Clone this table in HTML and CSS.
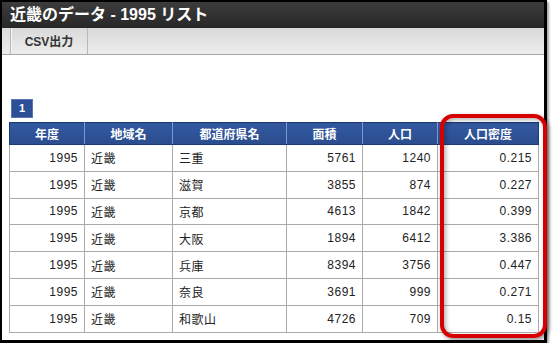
FILE: index.html
```html
<!DOCTYPE html>
<html lang="ja">
<head>
<meta charset="utf-8">
<link rel="stylesheet" href="styles.css">
</head>
<body>
<div class="frame">
  <div class="titlebar">近畿のデータ - 1995 リスト</div>
  <div class="toolbar">
    <div class="tool-btn">CSV出力</div>
  </div>
  <div class="content">
    <div class="pager"><span class="page">1</span></div>
    <table class="grid">
      <colgroup>
        <col class="c1"><col class="c2"><col class="c3"><col class="c4"><col class="c5"><col class="c6">
      </colgroup>
      <thead>
        <tr><th>年度</th><th>地域名</th><th>都道府県名</th><th>面積</th><th>人口</th><th>人口密度</th></tr>
      </thead>
      <tbody>
        <tr><td class="num">1995</td><td>近畿</td><td>三重</td><td class="num">5761</td><td class="num">1240</td><td class="num">0.215</td></tr>
        <tr><td class="num">1995</td><td>近畿</td><td>滋賀</td><td class="num">3855</td><td class="num">874</td><td class="num">0.227</td></tr>
        <tr><td class="num">1995</td><td>近畿</td><td>京都</td><td class="num">4613</td><td class="num">1842</td><td class="num">0.399</td></tr>
        <tr><td class="num">1995</td><td>近畿</td><td>大阪</td><td class="num">1894</td><td class="num">6412</td><td class="num">3.386</td></tr>
        <tr><td class="num">1995</td><td>近畿</td><td>兵庫</td><td class="num">8394</td><td class="num">3756</td><td class="num">0.447</td></tr>
        <tr><td class="num">1995</td><td>近畿</td><td>奈良</td><td class="num">3691</td><td class="num">999</td><td class="num">0.271</td></tr>
        <tr><td class="num">1995</td><td>近畿</td><td>和歌山</td><td class="num">4726</td><td class="num">709</td><td class="num">0.15</td></tr>
      </tbody>
    </table>
  </div>
  <div class="highlight"></div>
</div>
</body>
</html>
```

FILE: styles.css
```css
html, body {
  margin: 0;
  padding: 0;
  background: #ffffff;
}
body {
  font-family: "Liberation Sans", "Noto Sans CJK JP", sans-serif;
  font-size: 12px;
  color: #222;
}
.frame {
  position: relative;
  width: 542px;
  height: 338px;
  border-left: 2px solid #000;
  border-top: 2px solid #000;
  border-right: 3px solid #000;
  border-bottom: 3px solid #000;
  box-shadow: 2px 2px 2px rgba(0,0,0,0.35);
  background: #fff;
}
.titlebar {
  height: 26px;
  line-height: 25px;
  padding-left: 8px;
  color: #fff;
  font-size: 16px;
  font-weight: bold;
  background: linear-gradient(#3c3c3c, #272727);
}
.toolbar {
  height: 26px;
  display: flex;
  padding-left: 8px;
  background: linear-gradient(#d9d9d9, #ededed);
  border-bottom: 1px solid #a8a8a8;
}
.tool-btn {
  width: 76px;
  border-left: 1px solid #b8b8b8;
  border-right: 1px solid #b8b8b8;
  box-shadow: inset 1px 0 0 #f4f4f4;
  display: flex;
  align-items: center;
  justify-content: center;
  font-weight: bold;
  font-size: 12px;
  color: #333;
  padding-bottom: 1px;
}
.content {
  padding: 44px 0 0 7px;
}
.pager {
  display: flex;
  padding-left: 2px;
  margin-bottom: 4px;
}
.page {
  width: 20px;
  height: 17px;
  background: #2d4f96;
  border: 1px solid #5b77b3;
  color: #fff;
  font-weight: bold;
  font-size: 11px;
  line-height: 17px;
  text-align: center;
}
.grid {
  border-collapse: collapse;
  width: 529px;
  table-layout: fixed;
}
.c1 { width: 75px; }
.c2 { width: 88px; }
.c3 { width: 114px; }
.c4 { width: 76px; }
.c5 { width: 75px; }
.c6 { width: 101px; }
.grid th {
  height: 21px;
  padding: 0;
  background: linear-gradient(#3359a0, #2b4d8e);
  color: #fff;
  font-weight: bold;
  font-size: 12px;
  border: 1px solid #1e3a72;
  border-left-color: #7f98cc;
  border-right-color: #7f98cc;
  text-align: center;
}
.grid th:first-child { border-left-color: #1e3a72; }
.grid th:last-child { border-right-color: #1e3a72; }
.grid td {
  height: 25.8px;
  padding: 0 6px;
  border: 1px solid #aaaaaa;
  font-size: 12px;
  color: #222;
  letter-spacing: 0.5px;
}
.grid td.num { text-align: right; }
.highlight {
  position: absolute;
  left: 438px;
  top: 112px;
  width: 99px;
  height: 216px;
  border: 4px solid #d60000;
  border-radius: 13px;
  box-shadow: 2px 2px 4px rgba(0,0,0,0.45), inset 2px 2px 4px rgba(0,0,0,0.3);
}
```
